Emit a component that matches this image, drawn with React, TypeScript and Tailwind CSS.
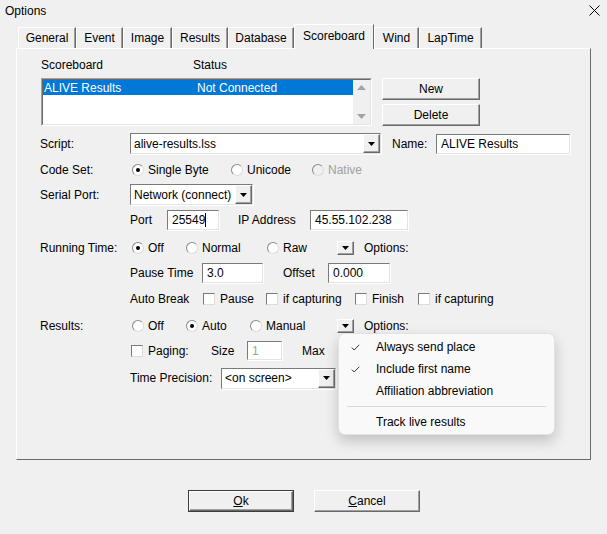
import type { ReactNode } from "react";

// Options dialog – Scoreboard tab

const sunken =
  "border border-t-[#7a7a7a] border-l-[#7a7a7a] border-r-[#e3e3e3] border-b-[#e3e3e3] shadow-[1px_1px_0_#ffffff]";
const raised =
  "bg-[#f0f0f0] border border-t-white border-l-white border-r-[#696969] border-b-[#696969] shadow-[inset_-1px_-1px_0_#a0a0a0]";

const TABS = [
  { label: "General", w: "w-[58px]" },
  { label: "Event", w: "w-[47px]" },
  { label: "Image", w: "w-[49px]" },
  { label: "Results", w: "w-[56px]" },
  { label: "Database", w: "w-[66px]" },
  { label: "Scoreboard", w: "w-[80px]", active: true },
  { label: "Wind", w: "w-[45px]" },
  { label: "LapTime", w: "w-[63px]" },
];

function Tri({ color = "#000" }: { color?: string }) {
  return (
    <svg width="7" height="4" viewBox="0 0 7 4">
      <path d="M0 0h7L3.5 4z" fill={color} />
    </svg>
  );
}

function DropBtn({ className = "" }: { className?: string }) {
  return (
    <div className={`${raised} ${className} flex items-center justify-center shrink-0`}>
      <Tri />
    </div>
  );
}

function Combo({ w, text }: { w: string; text: string }) {
  return (
    <div className={`${w} h-[21px] ${sunken} bg-white flex shrink-0`}>
      <span className="flex-1 pl-[3px] flex items-center whitespace-nowrap overflow-hidden">{text}</span>
      <DropBtn className="w-[17px] h-full" />
    </div>
  );
}

function Input({ w, h = "h-[20px]", children, muted }: { w: string; h?: string; children?: ReactNode; muted?: boolean }) {
  return (
    <div
      className={`${w} ${h} ${sunken} ${muted ? "bg-white text-[#a0a0a0]" : "bg-white"} pl-[4px] flex items-center shrink-0 whitespace-nowrap`}
    >
      {children}
    </div>
  );
}

function Radio({ w, label, checked, disabled }: { w?: string; label: string; checked?: boolean; disabled?: boolean }) {
  return (
    <div className={`${w ?? ""} flex items-center gap-[4px] shrink-0 ${disabled ? "text-[#a0a0a0]" : ""}`}>
      <span
        className={`w-[12px] h-[12px] rounded-full border border-t-[#8a8a8a] border-l-[#8a8a8a] border-r-[#dcdcdc] border-b-[#dcdcdc] ${
          disabled ? "bg-[#f0f0f0]" : "bg-white"
        } flex items-center justify-center`}
      >
        {checked && <span className="w-[4px] h-[4px] rounded-full bg-black" />}
      </span>
      <span>{label}</span>
    </div>
  );
}

function Check({ w, label }: { w?: string; label: string }) {
  return (
    <div className={`${w ?? ""} flex items-center gap-[5px] shrink-0`}>
      <span className="w-[12px] h-[12px] bg-white border border-t-[#7a7a7a] border-l-[#7a7a7a] border-r-[#dcdcdc] border-b-[#dcdcdc]" />
      <span>{label}</span>
    </div>
  );
}

function Button({ w, children, def }: { w: string; children: ReactNode; def?: boolean }) {
  return (
    <div className={`${w} h-[22px] ${def ? "border border-[#3c3c3c]" : ""}`}>
      <div className={`${raised} w-full h-full flex items-center justify-center`}>{children}</div>
    </div>
  );
}

function CheckMark() {
  return (
    <svg width="9" height="7" viewBox="0 0 9 7" fill="none">
      <path d="M0.8 3.6 L3.2 6 L8.2 0.8" stroke="#333" strokeWidth="1" />
    </svg>
  );
}

export default function App() {
  return (
    <div className="w-[607px] h-[534px] bg-[#f0f0f0] relative overflow-hidden text-[12px] leading-[14px] text-black font-['Liberation_Sans',Arial,sans-serif]">
      {/* ── title bar ── */}
      <div className="h-[21px] flex items-center justify-between pl-[5px] pr-[5px]">
        <span>Options</span>
        <svg width="11" height="11" viewBox="0 0 11 11" className="mr-[2px]">
          <path d="M0.5 0.5 L10.5 10.5 M10.5 0.5 L0.5 10.5" stroke="#000" strokeWidth="1" />
        </svg>
      </div>

      {/* ── tab strip ── */}
      <div className="h-[27px] pl-[18px] flex items-end">
        {TABS.map((t) =>
          t.active ? (
            <div
              key={t.label}
              className={`${t.w} h-[25px] -mb-[1px] relative z-10 bg-[#f0f0f0] border-t border-l border-white border-r border-r-[#696969] flex items-center justify-center pb-[3px]`}
            >
              {t.label}
            </div>
          ) : (
            <div
              key={t.label}
              className={`${t.w} h-[21px] bg-[#f0f0f0] border-t border-l border-white border-r border-r-[#696969] shadow-[inset_-1px_0_0_#a0a0a0] flex items-center justify-center`}
            >
              {t.label}
            </div>
          )
        )}
      </div>

      {/* ── tab panel ── */}
      <div className="ml-[16px] w-[575px] h-[412px] border border-t-white border-l-white border-r-[#696969] border-b-[#696969] pl-[23px] pt-[9px] flex flex-col">
        {/* headers */}
        <div className="h-[14px] flex items-center pl-[1px]">
          <span className="w-[152px]">Scoreboard</span>
          <span>Status</span>
        </div>

        {/* list + buttons */}
        <div className="mt-[6px] h-[48px] flex pl-[1px]">
          <div className="w-[331px] h-[48px] border border-t-[#a0a0a0] border-l-[#a0a0a0] border-r-white border-b-white">
            <div className="w-full h-full border border-t-[#696969] border-l-[#696969] border-r-[#e3e3e3] border-b-[#e3e3e3] bg-white flex">
              <div className="flex-1">
                <div className="h-[15px] bg-[#0078d7] text-white flex items-center pl-[1px]">
                  <span className="w-[153px]">ALIVE Results</span>
                  <span>Not Connected</span>
                </div>
              </div>
              <div className="w-[17px] bg-[#f0f0f0] flex flex-col items-center justify-between py-[5px]">
                <svg width="9" height="5" viewBox="0 0 9 5">
                  <path d="M0 5h9L4.5 0z" fill="#a3a3a3" />
                </svg>
                <svg width="9" height="5" viewBox="0 0 9 5">
                  <path d="M0 0h9L4.5 5z" fill="#a3a3a3" />
                </svg>
              </div>
            </div>
          </div>
          <div className="ml-[10px] flex flex-col gap-[4px]">
            <Button w="w-[98px]">New</Button>
            <Button w="w-[98px]">Delete</Button>
          </div>
        </div>

        {/* script */}
        <div className="mt-[7px] h-[21px] flex items-center">
          <span className="w-[90px]">Script:</span>
          <Combo w="w-[251px]" text="alive-results.lss" />
          <span className="ml-[11px] w-[44px]">Name:</span>
          <Input w="w-[134px]" h="h-[20px]">ALIVE Results</Input>
        </div>

        {/* code set */}
        <div className="mt-[8px] h-[16px] flex items-center">
          <span className="w-[92px]">Code Set:</span>
          <Radio w="w-[99px]" label="Single Byte" checked />
          <Radio w="w-[81px]" label="Unicode" />
          <Radio label="Native" disabled />
        </div>

        {/* serial port */}
        <div className="mt-[6px] h-[21px] flex items-center">
          <span className="w-[90px]">Serial Port:</span>
          <Combo w="w-[123px]" text="Network (connect)" />
        </div>

        {/* port / ip */}
        <div className="mt-[5px] h-[20px] flex items-center pl-[90px]">
          <span className="w-[37px]">Port</span>
          <Input w="w-[52px]">
            25549<span className="w-px h-[14px] bg-black" />
          </Input>
          <span className="ml-[19px] w-[72px]">IP Address</span>
          <Input w="w-[98px]">45.55.102.238</Input>
        </div>

        {/* running time */}
        <div className="mt-[9px] h-[17px] flex items-center">
          <span className="w-[92px]">Running Time:</span>
          <Radio w="w-[54px]" label="Off" checked />
          <Radio w="w-[81px]" label="Normal" />
          <Radio w="w-[70px]" label="Raw" />
          <DropBtn className="w-[17px] h-[14px]" />
          <span className="ml-[10px]">Options:</span>
        </div>

        {/* pause time / offset */}
        <div className="mt-[7px] h-[20px] flex items-center pl-[90px]">
          <span className="w-[72px]">Pause Time</span>
          <Input w="w-[61px]">3.0</Input>
          <span className="ml-[20px] w-[45px]">Offset</span>
          <Input w="w-[62px]">0.000</Input>
        </div>

        {/* auto break */}
        <div className="mt-[8px] h-[16px] flex items-center pl-[90px]">
          <span className="w-[73px]">Auto Break</span>
          <Check w="w-[63px]" label="Pause" />
          <Check w="w-[89px]" label="if capturing" />
          <Check w="w-[63px]" label="Finish" />
          <Check label="if capturing" />
        </div>

        {/* results */}
        <div className="mt-[11px] h-[16px] flex items-center">
          <span className="w-[92px]">Results:</span>
          <Radio w="w-[54px]" label="Off" />
          <Radio w="w-[64px]" label="Auto" checked />
          <Radio w="w-[87px]" label="Manual" />
          <DropBtn className="w-[17px] h-[14px]" />
          <span className="ml-[10px]">Options:</span>
        </div>

        {/* paging */}
        <div className="mt-[7px] h-[19px] flex items-center pl-[91px]">
          <Check w="w-[80px]" label="Paging:" />
          <span className="w-[36px]">Size</span>
          <Input w="w-[35px]" h="h-[19px]" muted>
            1
          </Input>
          <span className="ml-[20px]">Max</span>
        </div>

        {/* time precision */}
        <div className="mt-[8px] h-[20px] flex items-center pl-[90px]">
          <span className="w-[91px]">Time Precision:</span>
          <Combo w="w-[115px]" text="<on screen>" />
        </div>
      </div>

      {/* ── dialog buttons ── */}
      <div className="mt-[30px] pl-[188px] flex gap-[20px]">
        <Button w="w-[106px]" def>
          <span>
            <span className="underline">O</span>k
          </span>
        </Button>
        <Button w="w-[106px]">
          <span>
            <span className="underline">C</span>ancel
          </span>
        </Button>
      </div>

      {/* ── results options popup menu ── */}
      <div className="absolute left-[338px] top-[333px] w-[217px] h-[102px] bg-[#f9f9f9] rounded-[7px] border border-[#e2e2e2] shadow-[0_6px_14px_rgba(0,0,0,0.2)] pt-[2px] flex flex-col">
        {[
          { label: "Always send place", checked: true },
          { label: "Include first name", checked: true },
          { label: "Affiliation abbreviation" },
        ].map((item) => (
          <div key={item.label} className="h-[22px] flex items-center">
            <span className="w-[37px] pl-[12px] flex items-center">{item.checked && <CheckMark />}</span>
            <span>{item.label}</span>
          </div>
        ))}
        <div className="mx-[8px] mt-[4px] mb-[4px] h-px bg-[#d9d9d9]" />
        <div className="h-[22px] flex items-center pl-[37px]">Track live results</div>
      </div>
    </div>
  );
}
